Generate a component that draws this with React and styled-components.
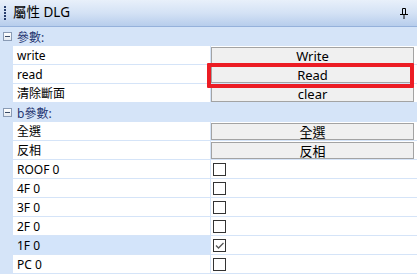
import styled, { createGlobalStyle } from 'styled-components';

const GlobalStyle = createGlobalStyle`
  html, body {
    margin: 0;
    padding: 0;
    background: #ffffff;
  }
  body {
    font-family: "Noto Sans", "Noto Sans CJK TC", sans-serif;
  }
`;

const Panel = styled.div`
  position: relative;
  width: 417px;
  height: 276px;
  overflow: hidden;
  background: #ffffff;
  font-size: 12px;
  color: #000;
`;

const TitleBar = styled.div`
  display: flex;
  align-items: center;
  height: 27px;
  padding: 0 9px 0 4px;
  box-sizing: border-box;
  background: linear-gradient(#e8f0fa 0%, #d4e2f5 50%, #b7cdec 100%);
  border-bottom: 1px solid #95b1db;
`;

const Grip = styled.div`
  width: 2px;
  height: 14px;
  margin-right: 7px;
  background: repeating-linear-gradient(#283f6e 0 2px, transparent 2px 3px);
`;

const Title = styled.div`
  flex: 1;
  font-size: 13.5px;
  line-height: 1;
  margin-top: -1px;
`;

const Row = styled.div`
  display: grid;
  grid-template-columns: 13px 197px 1fr;
  height: 19px;
`;

const Gutter = styled.div`
  background: #d5e4f8;
`;

const NameCell = styled.div`
  display: flex;
  align-items: center;
  padding-left: 4px;
  border-bottom: 1px solid #d5e4f8;
  background: ${(p) => (p.$selected ? '#d3e4fa' : '#ffffff')};
  white-space: nowrap;
`;

const ValueCell = styled.div`
  display: flex;
  align-items: ${(p) => (p.$top ? 'flex-start' : 'center')};
  border-left: 1px solid #d5e4f8;
  border-bottom: 1px solid #d5e4f8;
  padding: ${(p) => (p.$top ? '1px 3px 0 0' : '0 0 0 2px')};
`;

const CategoryRow = styled.div`
  display: flex;
  align-items: center;
  height: 19px;
  background: #d5e4f8;
`;

const Toggle = styled.div`
  width: 7px;
  height: 7px;
  margin: 0 5px 0 3px;
  border: 1px solid #8a9bb5;
  background: linear-gradient(#ffffff, #e4e9f0);
  position: relative;
  &::after {
    content: '';
    position: absolute;
    left: 1px;
    right: 1px;
    top: 3px;
    height: 1px;
    background: #3a4a66;
  }
`;

const CategoryLabel = styled.span`
  color: #1f3570;
`;

const Button = styled.div`
  flex: 1;
  height: 17px;
  box-sizing: border-box;
  display: flex;
  align-items: center;
  justify-content: center;
  background: #f0f0f0;
  border: 1px solid #a3a3a3;
  font-size: 13px;
`;

const CheckBox = styled.div`
  width: 13px;
  height: 13px;
  box-sizing: border-box;
  border: 1px solid #333333;
  background: #ffffff;
  display: flex;
  align-items: center;
  justify-content: center;
`;

const Highlight = styled.div`
  position: absolute;
  left: 207px;
  top: 63px;
  width: 207px;
  height: 25px;
  box-sizing: border-box;
  border: 4px solid #ec1c24;
  border-radius: 1px;
  pointer-events: none;
`;

const PinIcon = () => (
  <svg width="8" height="11" viewBox="0 0 8 11">
    <path d="M2.5 0.5h3v6h-3z" fill="none" stroke="#000" />
    <path d="M0 6.5h8" stroke="#000" />
    <path d="M4 7v4" stroke="#000" />
  </svg>
);

const CheckMark = () => (
  <svg width="11" height="11" viewBox="0 0 11 11">
    <path d="M2 5.5l2.5 2.5l5-5" fill="none" stroke="#555" strokeWidth="1.3" />
  </svg>
);

const Category = ({ label }) => (
  <CategoryRow>
    <Toggle />
    <CategoryLabel>{label}</CategoryLabel>
  </CategoryRow>
);

const ButtonRow = ({ name, label }) => (
  <Row>
    <Gutter />
    <NameCell>{name}</NameCell>
    <ValueCell $top>
      <Button>{label}</Button>
    </ValueCell>
  </Row>
);

const CheckRow = ({ name, checked, selected }) => (
  <Row>
    <Gutter />
    <NameCell $selected={selected}>{name}</NameCell>
    <ValueCell>
      <CheckBox>{checked && <CheckMark />}</CheckBox>
    </ValueCell>
  </Row>
);

const floors = [
  { name: 'ROOF 0' },
  { name: '4F 0' },
  { name: '3F 0' },
  { name: '2F 0' },
  { name: '1F 0', checked: true, selected: true },
  { name: 'PC 0' },
];

const App = () => (
  <>
    <GlobalStyle />
    <Panel>
      <TitleBar>
        <Grip />
        <Title>屬性 DLG</Title>
        <PinIcon />
      </TitleBar>
      <Category label="參數:" />
      <ButtonRow name="write" label="Write" />
      <ButtonRow name="read" label="Read" />
      <ButtonRow name="清除斷面" label="clear" />
      <Category label="b參數:" />
      <ButtonRow name="全選" label="全選" />
      <ButtonRow name="反相" label="反相" />
      {floors.map((f) => (
        <CheckRow key={f.name} {...f} />
      ))}
      <Highlight />
    </Panel>
  </>
);

export default App;
